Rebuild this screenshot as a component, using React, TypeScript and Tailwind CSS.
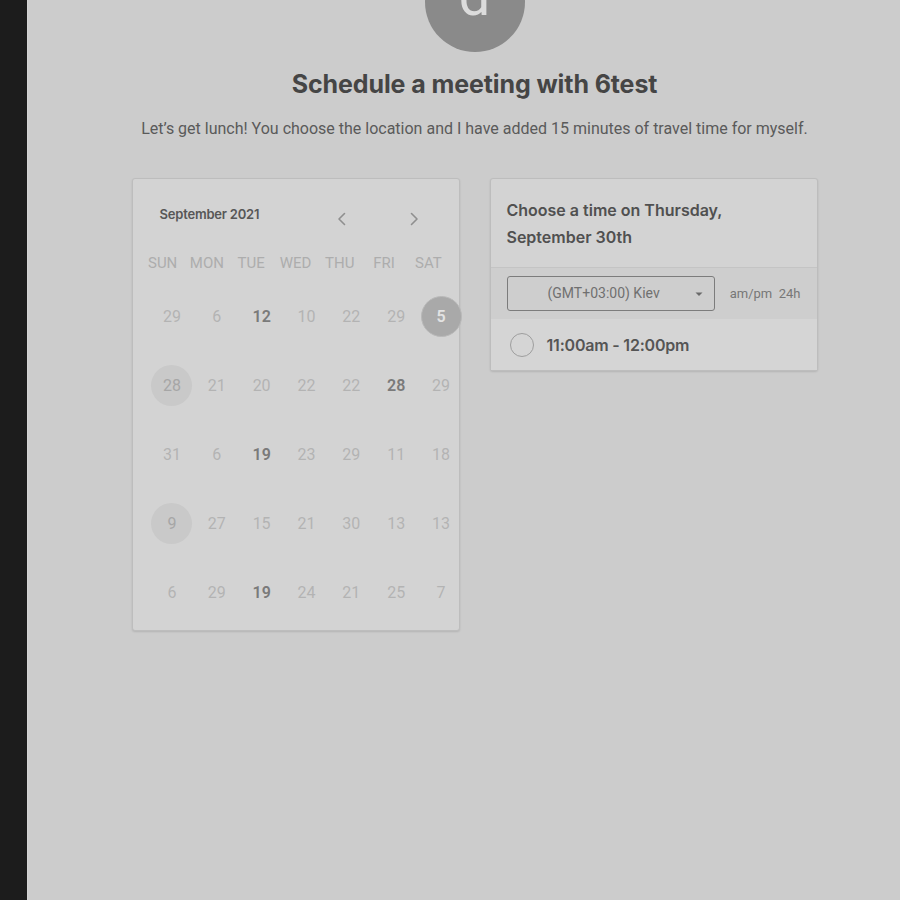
import React from "react"

const weekdays = ["SUN", "MON", "TUE", "WED", "THU", "FRI", "SAT"]

type Day = { n: number; bold?: boolean; mark?: "selected" | "soft" }

const weeks: Day[][] = [
  [{ n: 29 }, { n: 6 }, { n: 12, bold: true }, { n: 10 }, { n: 22 }, { n: 29 }, { n: 5, mark: "selected" }],
  [{ n: 28, mark: "soft" }, { n: 21 }, { n: 20 }, { n: 22 }, { n: 22 }, { n: 28, bold: true }, { n: 29 }],
  [{ n: 31 }, { n: 6 }, { n: 19, bold: true }, { n: 23 }, { n: 29 }, { n: 11 }, { n: 18 }],
  [{ n: 9, mark: "soft" }, { n: 27 }, { n: 15 }, { n: 21 }, { n: 30 }, { n: 13 }, { n: 13 }],
  [{ n: 6 }, { n: 29 }, { n: 19, bold: true }, { n: 24 }, { n: 21 }, { n: 25 }, { n: 7 }],
]

const Chevron = ({ dir }: { dir: "left" | "right" }) => (
  <svg className="mt-[5px]" width="24" height="24" viewBox="0 0 24 24" fill="none" stroke="#8f8f8f" strokeWidth="1.6" strokeLinecap="round" strokeLinejoin="round">
    {dir === "left" ? <path d="M14.5 6.5 9 12l5.5 5.5" /> : <path d="M9.5 6.5 15 12l-5.5 5.5" />}
  </svg>
)

function DayCell({ day }: { day: Day }) {
  let circle = ""
  let text = day.bold ? "text-[#7a7a7a] font-semibold" : "text-[#b3b3b3]"
  if (day.mark === "selected") {
    circle = "bg-[#a9a9a9] border border-[#b9b9b9]"
    text = "text-[#e3e3e3] font-semibold"
  } else if (day.mark === "soft") {
    circle = "bg-[#c9c9c9]"
    text = "text-[#a6a6a6]"
  }
  return (
    <div className="flex h-[69px] items-center justify-center">
      <div className={`flex h-[41px] w-[41px] items-center justify-center rounded-full text-[16px] ${circle} ${text}`}>
        {day.n}
      </div>
    </div>
  )
}

export default function App() {
  return (
    <div className="flex min-h-[900px] bg-[#cccccc] font-['Roboto',sans-serif]">
      <div className="w-[28px] shrink-0 border-r border-[#d2d2d2] bg-[#1c1c1c]" />
      <main className="flex flex-1 flex-col items-center pl-[21px]">
        <div className="mt-[-48px] flex h-[100px] w-[100px] items-end justify-center rounded-full bg-[#8a8a8a]">
          <span className="mb-[28px] text-[56px] leading-none text-[#dcdcdc]">d</span>
        </div>

        <h1 className="mt-[16px] font-['Inter',sans-serif] text-[25px] font-bold leading-[32px] tracking-[-0.1px] text-[#454545]">
          Schedule a meeting with 6test
        </h1>
        <p className="mt-[17px] text-[16px] leading-[24px] text-[#5a5a5a]">
          Let’s get lunch! You choose the location and I have added 15 minutes of travel time for myself.
        </p>

        <div className="mt-[37px] flex items-start gap-[30px]">
          {/* calendar */}
          <div className="w-[328px] rounded-[3px] border border-[#bdbdbd] bg-[#d3d3d3] pt-[23px] pb-[3px] shadow-[0_1px_2px_rgba(0,0,0,0.12)]">
            <div className="flex items-start pl-[27px]">
              <span className="w-[170px] font-['Inter',sans-serif] text-[13px] font-semibold leading-[24px] tracking-[-0.2px] text-[#575757]">
                September 2021
              </span>
              <Chevron dir="left" />
              <span className="w-[48px]" />
              <Chevron dir="right" />
            </div>
            <div className="mt-[17px] ml-[8px] grid h-[30px] w-[310px] grid-cols-7 items-center">
              {weekdays.map((d) => (
                <div key={d} className="text-center text-[15px] text-[#adadad]">
                  {d}
                </div>
              ))}
            </div>
            <div className="mt-[4px] ml-[17px] grid w-[314px] grid-cols-7">
              {weeks.flat().map((day, i) => (
                <DayCell key={i} day={day} />
              ))}
            </div>
          </div>

          {/* time picker */}
          <div className="w-[328px] rounded-[3px] border border-[#bdbdbd] bg-[#d3d3d3] shadow-[0_1px_2px_rgba(0,0,0,0.12)]">
            <div className="px-[16px] pt-[18px] pb-[16px] font-['Inter',sans-serif] text-[16px] font-semibold leading-[27px] text-[#505050]">
              Choose a time on Thursday,
              <br />
              September 30th
            </div>
            <div className="flex h-[52px] items-center gap-[15px] border-t border-[#c4c4c4] bg-[#cecece] px-[16px]">
              <div className="flex h-[35px] w-[209px] items-center rounded-[3px] border border-[#7c7c7c] pl-[40px] pr-[10px]">
                <span className="flex-1 text-[14px] text-[#707070]">(GMT+03:00) Kiev</span>
                <svg width="10" height="10" viewBox="0 0 10 10">
                  <path d="M1.5 3.5h7L5 7z" fill="#6a6a6a" />
                </svg>
              </div>
              <span className="text-[13px] text-[#777777]">am/pm&nbsp;&nbsp;24h</span>
            </div>
            <div className="flex h-[51px] items-center bg-[#d5d5d5] pl-[19px]">
              <span className="h-[24px] w-[24px] rounded-full border-[1.5px] border-[#9e9e9e]" />
              <span className="ml-[13px] font-['Inter',sans-serif] text-[16px] font-semibold tracking-[-0.2px] text-[#555555]">
                11:00am - 12:00pm
              </span>
            </div>
          </div>
        </div>
      </main>
    </div>
  )
}
